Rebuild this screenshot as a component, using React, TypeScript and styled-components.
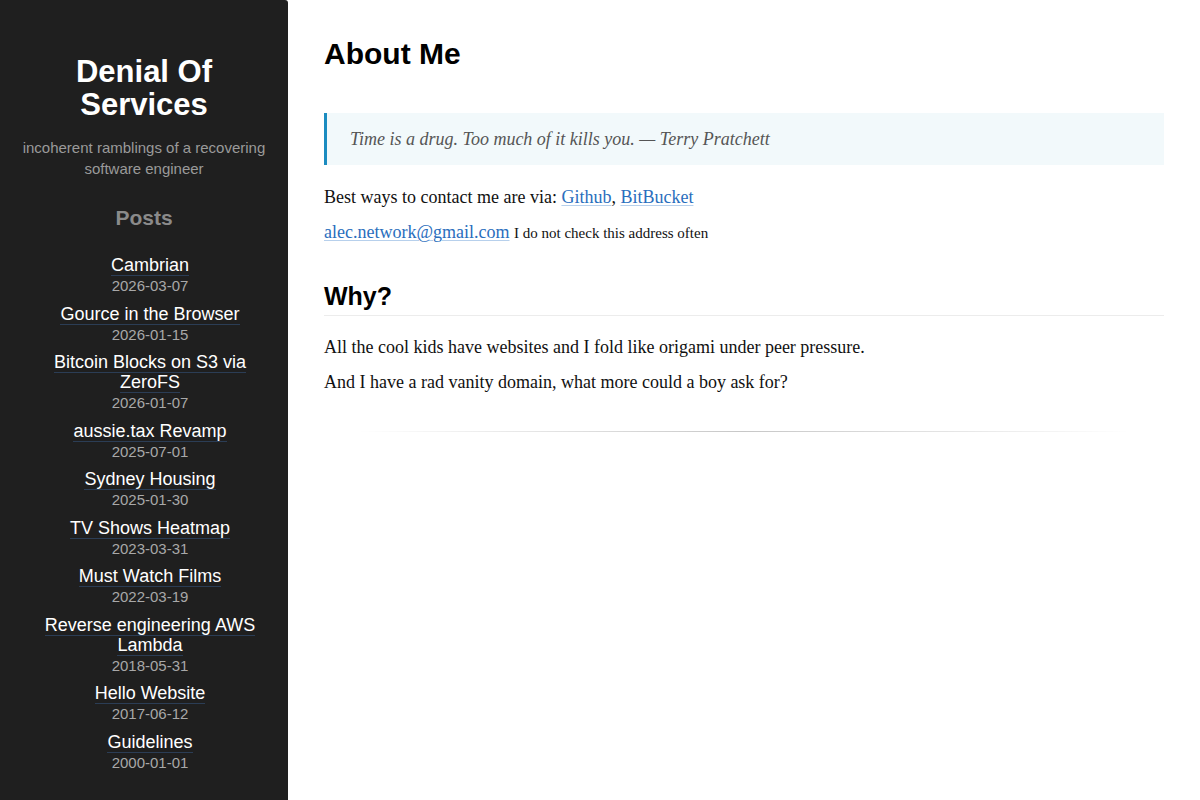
import React from "react";
import styled, { createGlobalStyle } from "styled-components";

const Global = createGlobalStyle`
  html, body { margin: 0; padding: 0; background: #fff; }
  body { font-family: "Liberation Serif", "Times New Roman", serif; color: #111; }
  * { box-sizing: border-box; }
`;

const Layout = styled.div`
  display: flex;
  min-height: 100vh;
`;

const Sidebar = styled.aside`
  flex: 0 0 288px;
  width: 288px;
  min-height: 100vh;
  background: #1f1f1f;
  padding: 55px 20px 30px;
  text-align: center;
  font-family: "Liberation Sans", Arial, sans-serif;
  border-top-right-radius: 3px;
`;

const SiteTitle = styled.h1`
  margin: 0;
  font-size: 31px;
  line-height: 33px;
  font-weight: 700;
  color: #fff;
`;

const Tagline = styled.p`
  margin: 16px 0 0;
  font-size: 15px;
  line-height: 21px;
  color: #9a9a9a;
`;

const SectionTitle = styled.h2`
  margin: 26px 0 0;
  font-size: 21px;
  line-height: 26px;
  font-weight: 700;
  color: #8a8a8a;
`;

const PostList = styled.ul`
  list-style: none;
  margin: 24px 0 0;
  padding: 0 0 0 12px;
`;

const PostItem = styled.li`
  margin: 0 0 7.55px;
`;

const PostLink = styled.a`
  font-size: 18px;
  line-height: 20px;
  color: #fff;
  text-decoration: none;
  border-bottom: 1px solid #2b3d55;
`;

const PostDate = styled.div`
  font-size: 15px;
  line-height: 21px;
  color: #a8a8a8;
`;

const Main = styled.main`
  flex: 1;
  padding: 36px 36px 40px;
`;

const PageTitle = styled.h1`
  margin: 0 0 41px;
  font-family: "Liberation Sans", Arial, sans-serif;
  font-size: 30px;
  line-height: 36px;
  font-weight: 700;
  color: #000;
`;

const Quote = styled.blockquote`
  margin: 0 0 19px;
  padding: 12px 20px 12px 23px;
  background: #f2f9fb;
  border-left: 3px solid #1c8cc0;
  font-style: italic;
  font-size: 18px;
  line-height: 28px;
  color: #555;
`;

const Para = styled.p`
  margin: 0 0 8px;
  font-size: 18px;
  line-height: 27px;
  color: #111;
`;

const Link = styled.a`
  color: #2a6ebd;
  text-decoration: underline;
  text-decoration-color: #b7d0ec;
  text-decoration-thickness: 1px;
  text-underline-offset: 2px;
`;

const Small = styled.small`
  font-size: 15px;
  color: #111;
`;

const SubHeading = styled.h2`
  margin: 34px 0 18px;
  padding-bottom: 4px;
  border-bottom: 1px solid #ececec;
  font-family: "Liberation Sans", Arial, sans-serif;
  font-size: 25px;
  line-height: 30px;
  font-weight: 700;
  color: #000;
`;

const Rule = styled.hr`
  margin: 35px 0 0;
  border: 0;
  height: 1px;
  background: linear-gradient(to right, rgba(0,0,0,0) 4%, rgba(0,0,0,0.22) 50%, rgba(0,0,0,0) 96%);
`;

const posts = [
  ["Cambrian", "2026-03-07"],
  ["Gource in the Browser", "2026-01-15"],
  ["Bitcoin Blocks on S3 via ZeroFS", "2026-01-07"],
  ["aussie.tax Revamp", "2025-07-01"],
  ["Sydney Housing", "2025-01-30"],
  ["TV Shows Heatmap", "2023-03-31"],
  ["Must Watch Films", "2022-03-19"],
  ["Reverse engineering AWS Lambda", "2018-05-31"],
  ["Hello Website", "2017-06-12"],
  ["Guidelines", "2000-01-01"],
];

export default function App() {
  return (
    <>
      <Global />
      <Layout>
        <Sidebar>
          <SiteTitle>Denial Of Services</SiteTitle>
          <Tagline>incoherent ramblings of a recovering software engineer</Tagline>
          <SectionTitle>Posts</SectionTitle>
          <PostList>
            {posts.map(([title, date]) => (
              <PostItem key={title}>
                <PostLink href="#">{title}</PostLink>
                <PostDate>{date}</PostDate>
              </PostItem>
            ))}
          </PostList>
        </Sidebar>
        <Main>
          <PageTitle>About Me</PageTitle>
          <Quote>Time is a drug. Too much of it kills you. — Terry Pratchett</Quote>
          <Para>
            Best ways to contact me are via: <Link href="#">Github</Link>, <Link href="#">BitBucket</Link>
          </Para>
          <Para>
            <Link href="#">alec.network@gmail.com</Link> <Small>I do not check this address often</Small>
          </Para>
          <SubHeading>Why?</SubHeading>
          <Para>All the cool kids have websites and I fold like origami under peer pressure.</Para>
          <Para>And I have a rad vanity domain, what more could a boy ask for?</Para>
          <Rule />
        </Main>
      </Layout>
    </>
  );
}
